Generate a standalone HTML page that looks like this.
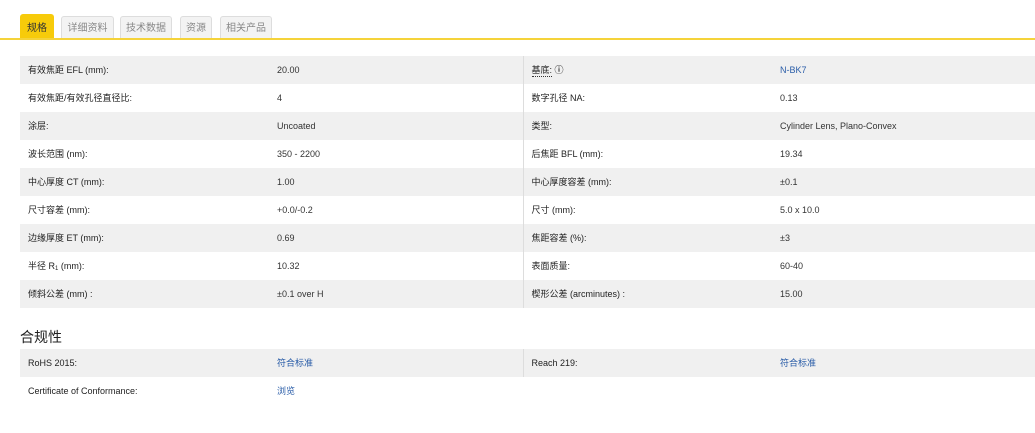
<!DOCTYPE html>
<html><head><meta charset="utf-8"><style>
*{margin:0;padding:0;box-sizing:border-box}
body{width:1035px;height:433px;background:#fff;font-family:"Liberation Sans","Noto Sans CJK SC",sans-serif;color:#333;position:relative;overflow:hidden}
.tab{position:absolute;top:16px;height:23px;font-size:10px;line-height:23px;text-align:center;border:1px solid #ddd;border-bottom:none;background:#f3f3f3;color:#888;border-radius:3px 3px 0 0}
.tab.a{background:#f7cb0a;border-color:#f7cb0a;color:#333;top:14px;height:25px;line-height:27px}
.line{position:absolute;left:0;top:38px;width:1035px;height:2px;background:#f5d33a}
table{position:absolute;left:20px;width:1015px;border-collapse:collapse;font-size:9px;table-layout:fixed}
td{height:28px;padding:0 0 0 8px;line-height:28px;white-space:nowrap;overflow:hidden}
td span,td a{line-height:28px}
tr:nth-child(odd) td{background:#f0f0f0}
td.c1{width:249px;color:#222}td.c2{width:254px;border-right:1px solid #ddd}td.c3{width:249px;color:#222}
a{color:#2a5da8;text-decoration:none}
h3{position:absolute;left:20px;top:327px;font-size:14px;font-weight:normal;color:#222}
sub{font-size:6px;line-height:0;vertical-align:-1px}
</style></head><body>
<div class="tab a" style="left:20px;width:34px">规格</div>
<div class="tab" style="left:61px;width:53px">详细资料</div>
<div class="tab" style="left:120px;width:52px">技术数据</div>
<div class="tab" style="left:180px;width:32px">资源</div>
<div class="tab" style="left:220px;width:52px">相关产品</div>
<div class="line"></div>
<table style="top:56px">
<tr><td class="c1">有效焦距 EFL (mm):</td><td class="c2">20.00</td><td class="c3"><span style="border-bottom:1px dotted #333;line-height:12px;display:inline-block">基底:</span> <b>ⓘ</b></td><td><a>N-BK7</a></td></tr>
<tr><td class="c1">有效焦距/有效孔径直径比:</td><td class="c2">4</td><td class="c3">数字孔径 NA:</td><td>0.13</td></tr>
<tr><td class="c1">涂层:</td><td class="c2">Uncoated</td><td class="c3">类型:</td><td>Cylinder Lens, Plano-Convex</td></tr>
<tr><td class="c1">波长范围 (nm):</td><td class="c2">350 - 2200</td><td class="c3">后焦距 BFL (mm):</td><td>19.34</td></tr>
<tr><td class="c1">中心厚度 CT (mm):</td><td class="c2">1.00</td><td class="c3">中心厚度容差 (mm):</td><td>±0.1</td></tr>
<tr><td class="c1">尺寸容差 (mm):</td><td class="c2">+0.0/-0.2</td><td class="c3">尺寸 (mm):</td><td>5.0 x 10.0</td></tr>
<tr><td class="c1">边缘厚度 ET (mm):</td><td class="c2">0.69</td><td class="c3">焦距容差 (%):</td><td>±3</td></tr>
<tr><td class="c1">半径 R<sub>1</sub> (mm):</td><td class="c2">10.32</td><td class="c3">表面质量:</td><td>60-40</td></tr>
<tr><td class="c1">倾斜公差 (mm) :</td><td class="c2">±0.1 over H</td><td class="c3">楔形公差 (arcminutes) :</td><td>15.00</td></tr>
</table>
<h3>合规性</h3>
<table style="top:349px">
<tr><td class="c1">RoHS 2015:</td><td class="c2"><a>符合标准</a></td><td class="c3">Reach 219:</td><td><a>符合标准</a></td></tr>
<tr><td class="c1">Certificate of Conformance:</td><td class="c2" style="border-right:none"><a>浏览</a></td><td class="c3"></td><td></td></tr>
</table>
</body></html>
